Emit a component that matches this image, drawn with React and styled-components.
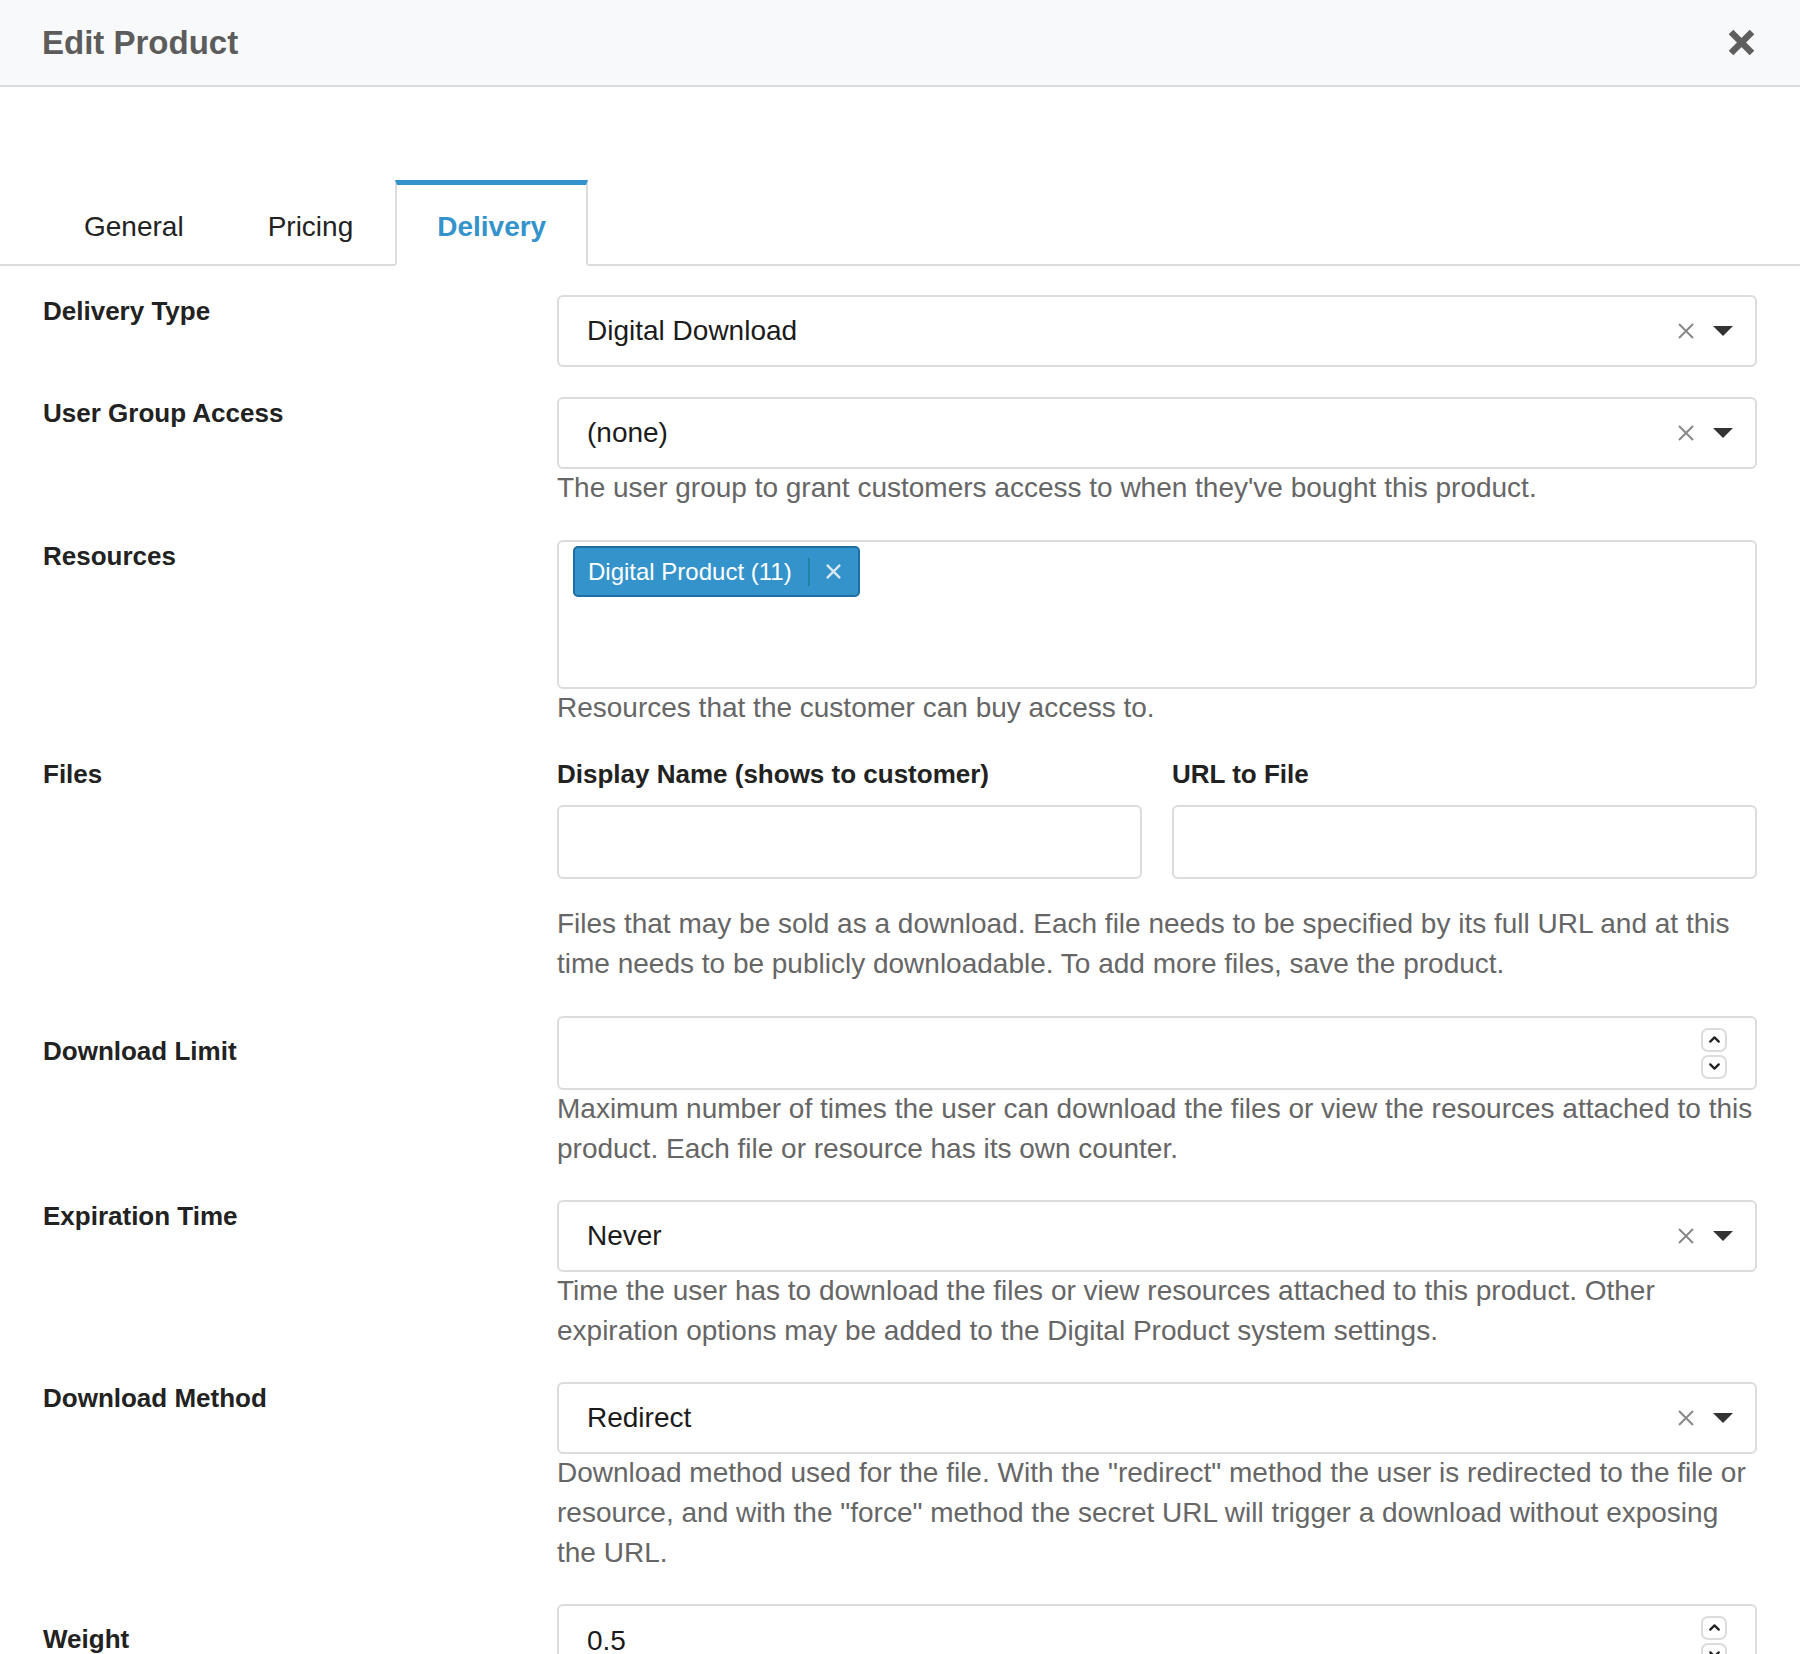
import React from "react";
import styled, { createGlobalStyle, css } from "styled-components";
import { ChevronUp, ChevronDown } from "lucide-react";

const GlobalStyle = createGlobalStyle`
  html, body { margin: 0; padding: 0; background: #fff; overflow: hidden; }
  body { font-family: "Liberation Sans", Arial, Helvetica, sans-serif; color: #222; }
  * { box-sizing: border-box; }
`;

const Modal = styled.div`
  width: 1800px;
  background: #fff;
`;

const Header = styled.header`
  display: flex;
  align-items: center;
  justify-content: space-between;
  height: 87px;
  padding: 0 45px 0 42px;
  background: #f8f9fa;
  border-bottom: 2px solid #dcdcdc;
`;

const Title = styled.h1`
  margin: 0;
  font-size: 33px;
  font-weight: bold;
  color: #5c5c5c;
`;

const CloseButton = styled.button`
  width: 27px;
  height: 27px;
  padding: 0;
  border: none;
  background: none;
  display: flex;
  cursor: pointer;
`;

const TabBar = styled.nav`
  display: flex;
  margin-top: 93px;
  padding: 0 42px;
  border-bottom: 2px solid #dcdcdc;
`;

const Tab = styled.div`
  height: 86px;
  display: flex;
  align-items: center;
  padding: 5px 40px 0;
  margin-bottom: -2px;
  border: 2px solid transparent;
  border-top-width: 5px;
  font-size: 28px;
  color: #222;
  ${(p) =>
    p.$active &&
    css`
      border-color: #dcdcdc;
      border-top-color: #3593cb;
      border-bottom-color: #fff;
      background: #fff;
      color: #3593cb;
      font-weight: bold;
    `}
`;

const Form = styled.div`
  padding: 29px 43px 0;
`;

const Group = styled.div`
  display: grid;
  grid-template-columns: 514px 1fr;
  margin-bottom: ${(p) => p.$mb || 31}px;
`;

const Label = styled.label`
  font-size: 26px;
  font-weight: bold;
  color: #222;
  line-height: 40px;
  margin-top: ${(p) => (p.$offset != null ? p.$offset : -4)}px;
`;

const Field = styled.div`
  min-width: 0;
`;

const SelectBox = styled.div`
  display: flex;
  align-items: center;
  height: 72px;
  padding: 0 22px 0 28px;
  border: 2px solid #dcdcdc;
  border-radius: 6px;
  background: #fff;
`;

const SelectValue = styled.span`
  flex: 1;
  font-size: 28px;
  color: #1b1b1b;
`;

const ClearIcon = styled.span`
  display: flex;
  margin-right: 19px;
`;

const Help = styled.div`
  font-size: 28px;
  line-height: 40px;
  color: #666;
  margin-top: ${(p) => (p.$top != null ? p.$top : -1)}px;
`;

const TagArea = styled.div`
  height: 149px;
  padding: 4px 14px;
  border: 2px solid #dcdcdc;
  border-radius: 6px;
  display: flex;
  align-items: flex-start;
`;

const Tag = styled.div`
  display: flex;
  align-items: center;
  height: 51px;
  padding: 0 17px 0 13px;
  background: #3593cb;
  border: 2px solid #1f6ea3;
  border-radius: 5px;
  color: #fff;
  font-size: 24px;
`;

const TagDivider = styled.span`
  width: 2px;
  height: 28px;
  background: #1d86a6;
  margin: 0 16px 0 16px;
`;

const SubGrid = styled.div`
  display: grid;
  grid-template-columns: 1fr 1fr;
  column-gap: 30px;
`;

const SubLabel = styled.div`
  font-size: 26px;
  font-weight: bold;
  color: #222;
  line-height: 32px;
  margin-bottom: 15px;
`;

const InputBox = styled.div`
  display: flex;
  align-items: center;
  height: 74px;
  padding: 0 28px;
  border: 2px solid #dcdcdc;
  border-radius: 6px;
  background: #fff;
`;

const TextInput = styled.input`
  flex: 1;
  min-width: 0;
  border: none;
  outline: none;
  padding: 0;
  font: inherit;
  font-size: 28px;
  color: #1b1b1b;
  background: transparent;
`;

const Spinner = styled.div`
  display: flex;
  flex-direction: column;
  gap: 3px;
`;

const SpinButton = styled.span`
  width: 26px;
  height: 24px;
  display: flex;
  align-items: center;
  justify-content: center;
  border: 2px solid #dcdcdc;
  border-radius: 7px;
  color: #222;
`;

const XMark = ({ size = 16, color = "#888", width = 2 }) => (
  <svg width={size} height={size} viewBox="0 0 16 16">
    <path d="M1 1L15 15M15 1L1 15" stroke={color} strokeWidth={width} fill="none" />
  </svg>
);

const Caret = () => (
  <svg width="20" height="10" viewBox="0 0 20 10">
    <path d="M0 0H20L10 10Z" fill="#333" />
  </svg>
);

const Select = ({ value }) => (
  <SelectBox>
    <SelectValue>{value}</SelectValue>
    <ClearIcon>
      <XMark />
    </ClearIcon>
    <Caret />
  </SelectBox>
);

const NumberInput = ({ value }) => (
  <InputBox>
    <TextInput type="text" defaultValue={value} />
    <Spinner>
      <SpinButton>
        <ChevronUp size={17} strokeWidth={3.2} />
      </SpinButton>
      <SpinButton>
        <ChevronDown size={17} strokeWidth={3.2} />
      </SpinButton>
    </Spinner>
  </InputBox>
);

export default function App() {
  return (
    <Modal>
      <GlobalStyle />
      <Header>
        <Title>Edit Product</Title>
        <CloseButton aria-label="Close">
          <svg width="27" height="27" viewBox="0 0 27 27">
            <path d="M3 3L24 24M24 3L3 24" stroke="#5e5e5e" strokeWidth="6.5" fill="none" />
          </svg>
        </CloseButton>
      </Header>

      <TabBar>
        <Tab>General</Tab>
        <Tab>Pricing</Tab>
        <Tab $active>Delivery</Tab>
      </TabBar>

      <Form>
        <Group $mb={30}>
          <Label>Delivery Type</Label>
          <Field>
            <Select value="Digital Download" />
          </Field>
        </Group>

        <Group $mb={32}>
          <Label>User Group Access</Label>
          <Field>
            <Select value="(none)" />
            <Help>The user group to grant customers access to when they've bought this product.</Help>
          </Field>
        </Group>

        <Group $mb={30}>
          <Label>Resources</Label>
          <Field>
            <TagArea>
              <Tag>
                Digital Product (11)
                <TagDivider />
                <XMark size={15} color="#dbe9f4" width={2.5} />
              </Tag>
            </TagArea>
            <Help>Resources that the customer can buy access to.</Help>
          </Field>
        </Group>

        <Group $mb={32}>
          <Label $offset={-4}>Files</Label>
          <Field>
            <SubGrid>
              <div>
                <SubLabel>Display Name (shows to customer)</SubLabel>
                <InputBox>
                  <TextInput type="text" defaultValue="" />
                </InputBox>
              </div>
              <div>
                <SubLabel>URL to File</SubLabel>
                <InputBox>
                  <TextInput type="text" defaultValue="" />
                </InputBox>
              </div>
            </SubGrid>
            <Help $top={25}>
              Files that may be sold as a download. Each file needs to be specified by its full URL and at this time
              needs to be publicly downloadable. To add more files, save the product.
            </Help>
          </Field>
        </Group>

        <Group $mb={31}>
          <Label $offset={15}>Download Limit</Label>
          <Field>
            <NumberInput value="" />
            <Help>
              Maximum number of times the user can download the files or view the resources attached to this product.
              Each file or resource has its own counter.
            </Help>
          </Field>
        </Group>

        <Group $mb={31}>
          <Label>Expiration Time</Label>
          <Field>
            <Select value="Never" />
            <Help>
              Time the user has to download the files or view resources attached to this product. Other expiration
              options may be added to the Digital Product system settings.
            </Help>
          </Field>
        </Group>

        <Group $mb={31}>
          <Label>Download Method</Label>
          <Field>
            <Select value="Redirect" />
            <Help>
              Download method used for the file. With the "redirect" method the user is redirected to the file or
              resource, and with the "force" method the secret URL will trigger a download without exposing the URL.
            </Help>
          </Field>
        </Group>

        <Group>
          <Label $offset={15}>Weight</Label>
          <Field>
            <NumberInput value="0.5" />
          </Field>
        </Group>
      </Form>
    </Modal>
  );
}
